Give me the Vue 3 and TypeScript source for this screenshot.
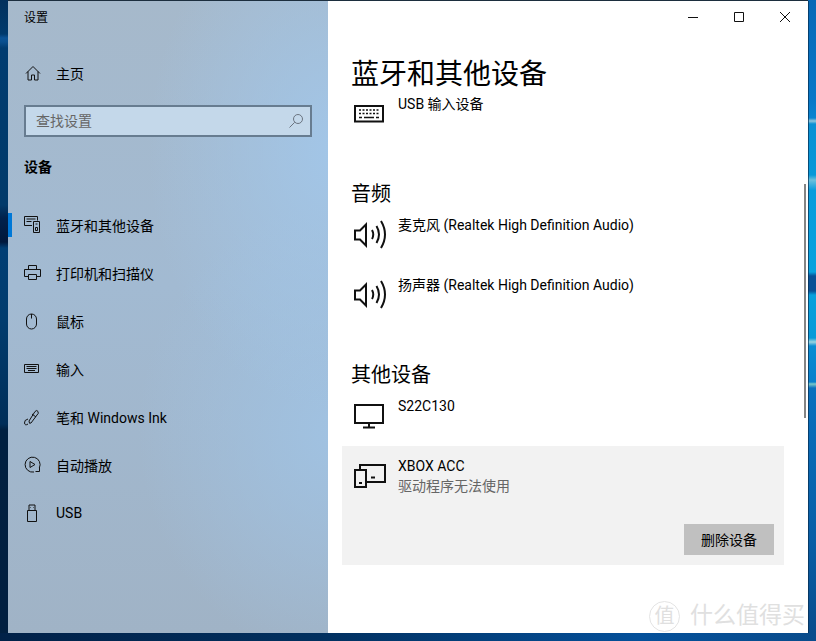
<template>
  <div class="desktop">
    <div class="window">
      <aside class="sidebar">
        <div class="app-title">设置</div>
        <div class="nav-row home">
          <svg class="nav-icon" viewBox="0 0 18 18">
            <path d="M2 9.500 9 2.500l7 7M4 7.500v8.500h3.500v-5h3v5H14V7.500" />
          </svg>
          <span>主页</span>
        </div>
        <div class="search">
          <span class="placeholder">查找设置</span>
          <svg width="16" height="16" viewBox="0 0 16 16">
            <circle cx="10" cy="6" r="4.500" />
            <path d="M6.700 9.300 1.500 14.500" />
          </svg>
        </div>
        <div class="section">设备</div>
        <nav>
          <div v-for="item in navItems" :key="item.label" class="nav-row" :class="{ active: item.active }">
            <svg class="nav-icon" viewBox="0 0 18 18">
              <path :d="item.icon" />
            </svg>
            <span>{{ item.label }}</span>
          </div>
        </nav>
      </aside>

      <main class="content">
        <div class="titlebar">
          <div class="winbtn">
            <svg width="12" height="12" viewBox="0 0 12 12"><path d="M1 6.500h10" /></svg>
          </div>
          <div class="winbtn">
            <svg width="12" height="12" viewBox="0 0 12 12"><path d="M1.500 1.500h9v9h-9z" /></svg>
          </div>
          <div class="winbtn">
            <svg width="12" height="12" viewBox="0 0 12 12"><path d="M1 1l10 10M11 1 1 11" /></svg>
          </div>
        </div>

        <h1>蓝牙和其他设备</h1>

        <div class="device">
          <svg class="dev-icon" viewBox="0 0 36 32">
            <path d="M3 9h28v15.500H3z" />
            <path class="thin" d="M7 13h20M7 16.500h20" stroke-dasharray="2 1.500" />
            <path class="thin" d="M7 20.500h3M12 20.500h10M24 20.500h3" />
          </svg>
          <div>USB 输入设备</div>
        </div>

        <h2>音频</h2>
        <div v-for="name in audioDevices" :key="name" class="device">
          <svg class="dev-icon" viewBox="0 0 36 32">
            <path d="M3 12.500h5l6-6v21l-6-6H3z" />
            <path d="M20 12q2.500 4.500 0 9M24.500 8q5 8.500 0 17M29 3q8 13.500 0 27" />
          </svg>
          <div>{{ name }}</div>
        </div>

        <h2>其他设备</h2>
        <div class="device short">
          <svg class="dev-icon" viewBox="0 0 36 32">
            <path d="M3 6h28v18H3zM17 24v4M11 28.500h12" />
          </svg>
          <div>S22C130</div>
        </div>

        <div class="panel">
          <div class="panel-head">
            <svg class="dev-icon" viewBox="0 0 36 32">
              <path d="M8 10V6h25v17H14" />
              <path d="M3 11h11v17H3zM7 24h3M19 18.500h4" />
            </svg>
            <div>
              <div>XBOX ACC</div>
              <div class="status">驱动程序无法使用</div>
            </div>
          </div>
          <div class="panel-actions">
            <button type="button">删除设备</button>
          </div>
        </div>

        <div class="scrollbar"></div>
      </main>
    </div>

    <div class="watermark">
      <span class="wm-badge">值</span>
      <span>什么值得买</span>
    </div>
  </div>
</template>

<script setup lang="ts">
interface NavItem {
  label: string
  icon: string
  active?: boolean
}

const navItems: NavItem[] = [
  {
    label: "蓝牙和其他设备",
    icon: "M8 9.500H.5v-9h13v4M2.500 3h9M2.500 5.500h5M9.500 5.500h6v11h-6zM11.500 8h2M11.500 11.500h2v3h-2z",
    active: true,
  },
  { label: "打印机和扫描仪", icon: "M4.500 5.500v-4h8v4M4.500 12.500h-4v-7h16v7h-4M4.500 10.500h8v5h-8z" },
  { label: "鼠标", icon: "M2.500 7a5 5 0 0 1 10 0v5a5 5 0 0 1-10 0zM7.500 2v4.500" },
  {
    label: "输入",
    icon: "M.5 4.500h14v8h-14zM2.500 6.500h10M2.500 8.500h10M4 10.500h7",
  },
  {
    label: "笔和 Windows Ink",
    icon: "M5 13 11 3.500q2-2 3 0t-1 3.500L7 15q-2 1.500-2-2zM8 6l4 3M4 11q-4 1-3.500 4t3.500 1",
  },
  {
    label: "自动播放",
    icon: "M10 16a7.500 7.500 0 1 1 5.300-4M6 5.500v6l5-3zM15.500 11.500v4h-4",
  },
  { label: "USB", icon: "M3.500 6.500h9v11h-9zM5 6.500V1h6v5.500M6.500 3.500h.5M9 3.500h.5" },
]

const audioDevices = ["麦克风 (Realtek High Definition Audio)", "扬声器 (Realtek High Definition Audio)"]
</script>

<style scoped>
.desktop {
  position: relative;
  box-sizing: border-box;
  width: 816px;
  height: 641px;
  padding: 1px 8px 8px;
  overflow: hidden;
  font-family: Roboto, "Noto Sans CJK SC", sans-serif;
  font-size: 14px;
  color: #000;
  background:
    linear-gradient(180deg, #0868b6 0, #0878c8 100px, #0a84d0 118px, #8fc6dc 121px, #0a90d4 124px, #0a98d8 175px, #6cc0dc 180px, #0a9cdc 190px, #0aa2de 272px, #0a5196 276px, #0a5196 291px, #0aa0dc 295px, #0a9ad8 338px, #9ad4e0 342px, #0a8cd2 346px, #0a80cc 382px, #7cc8c8 384px, #0a70be 388px, #0a5ea6 540px, #0a4c8c 633px) 808px 0 / 8px 100% no-repeat,
    linear-gradient(180deg, #02305c 0, #013a6c 34px, #0c5396 38px, #0a4f8e 42px, #013c70 48px, #013a6a 205px, #01224c 218px, #01183c 242px, #013e74 248px, #013c6e 320px, #012e58 424px, #012040 430px, #011f40 641px);
}
.desktop::after {
  content: "";
  position: absolute;
  left: 0;
  right: 0;
  bottom: 0;
  height: 8px;
  background: linear-gradient(90deg, #012148 0, #02305f 320px, #04509a 640px, #0a4c8c 816px);
}
.window {
  display: flex;
  height: 632px;
  box-shadow: 0 -1px 0 #1c2e3e, 1px 0 0 rgba(4, 44, 78, 0.7);
}
.sidebar {
  width: 320px;
  flex: none;
  box-sizing: border-box;
  background:
    radial-gradient(ellipse 190px 260px at 330px 150px, #a2c6e8 0, rgba(162, 198, 232, 0) 100%),
    radial-gradient(ellipse 200px 230px at 330px 430px, #a0c2e2 0, rgba(160, 194, 226, 0) 100%),
    linear-gradient(180deg, #a6b9cb 0, #a2bad2 45%, #a0b3c6 100%);
}
.app-title {
  height: 32px;
  padding-left: 16px;
  line-height: 35px;
  font-size: 12px;
}
.nav-row {
  position: relative;
  display: flex;
  align-items: center;
  height: 48px;
  padding-left: 16px;
}
.home {
  margin-top: 16px;
}
.nav-row.active::before {
  content: "";
  position: absolute;
  left: 0;
  top: 12px;
  width: 4px;
  height: 24px;
  background: #0078d7;
}
.nav-icon {
  width: 18px;
  height: 18px;
  margin-right: 14px;
  flex: none;
  fill: none;
  stroke: #111;
  stroke-width: 1;
}
.search {
  display: flex;
  align-items: center;
  justify-content: space-between;
  box-sizing: border-box;
  width: 288px;
  height: 32px;
  margin: 8px 0 0 16px;
  padding: 0 6px 0 10px;
  border: 2px solid #677c90;
  color: #666;
  background: #c4d8ea;
}
.placeholder {
  margin-top: -3px;
}
.search svg {
  fill: none;
  stroke: #6b7480;
  stroke-width: 1;
}
.section {
  margin: 19px 0 23px 16px;
  line-height: 22px;
  font-weight: 700;
}
.content {
  position: relative;
  flex: 1;
  box-sizing: border-box;
  padding-left: 24px;
  background: #fff;
}
.titlebar {
  display: flex;
  justify-content: flex-end;
  height: 32px;
  margin-left: -24px;
}
.winbtn {
  display: flex;
  align-items: center;
  justify-content: center;
  width: 46px;
}
.winbtn svg {
  fill: none;
  stroke: #111;
  stroke-width: 1;
}
h1 {
  margin: 22px 0 -1px -1px;
  line-height: 40px;
  font-size: 28px;
  font-weight: 400;
}
h2 {
  margin: 26px 0 7px -1px;
  line-height: 28px;
  font-size: 20px;
  font-weight: 400;
}
.device {
  display: flex;
  height: 60px;
  line-height: 20px;
}
.device.short {
  height: 50px;
}
.dev-icon {
  width: 36px;
  height: 32px;
  margin: 3px 10px 0 0;
  flex: none;
  fill: none;
  stroke: #111;
  stroke-width: 2;
}
.dev-icon .thin {
  stroke-width: 1.500;
}
.panel {
  box-sizing: border-box;
  width: 442px;
  height: 119px;
  margin-left: -10px;
  padding: 10px;
  background: #f2f2f2;
  line-height: 20px;
}
.panel-head {
  display: flex;
  height: 68px;
}
.status {
  color: #666;
}
.panel-actions {
  display: flex;
  justify-content: flex-end;
}
button {
  width: 90px;
  height: 31px;
  padding: 0;
  border: 0;
  font: inherit;
  color: #000;
  background: #c0c0c0;
}
.scrollbar {
  position: absolute;
  right: 2px;
  top: 183px;
  width: 2px;
  height: 234px;
  background: #858585;
}
.watermark {
  position: absolute;
  left: 649px;
  top: 600px;
  display: flex;
  align-items: center;
  gap: 10px;
  height: 32px;
  font-size: 23px;
  line-height: 32px;
  color: #e0e0e0;
}
.wm-badge {
  display: flex;
  align-items: center;
  justify-content: center;
  box-sizing: border-box;
  width: 31px;
  height: 31px;
  border: 1px solid #e4e4e4;
  border-radius: 50%;
  font-size: 20px;
}
</style>
